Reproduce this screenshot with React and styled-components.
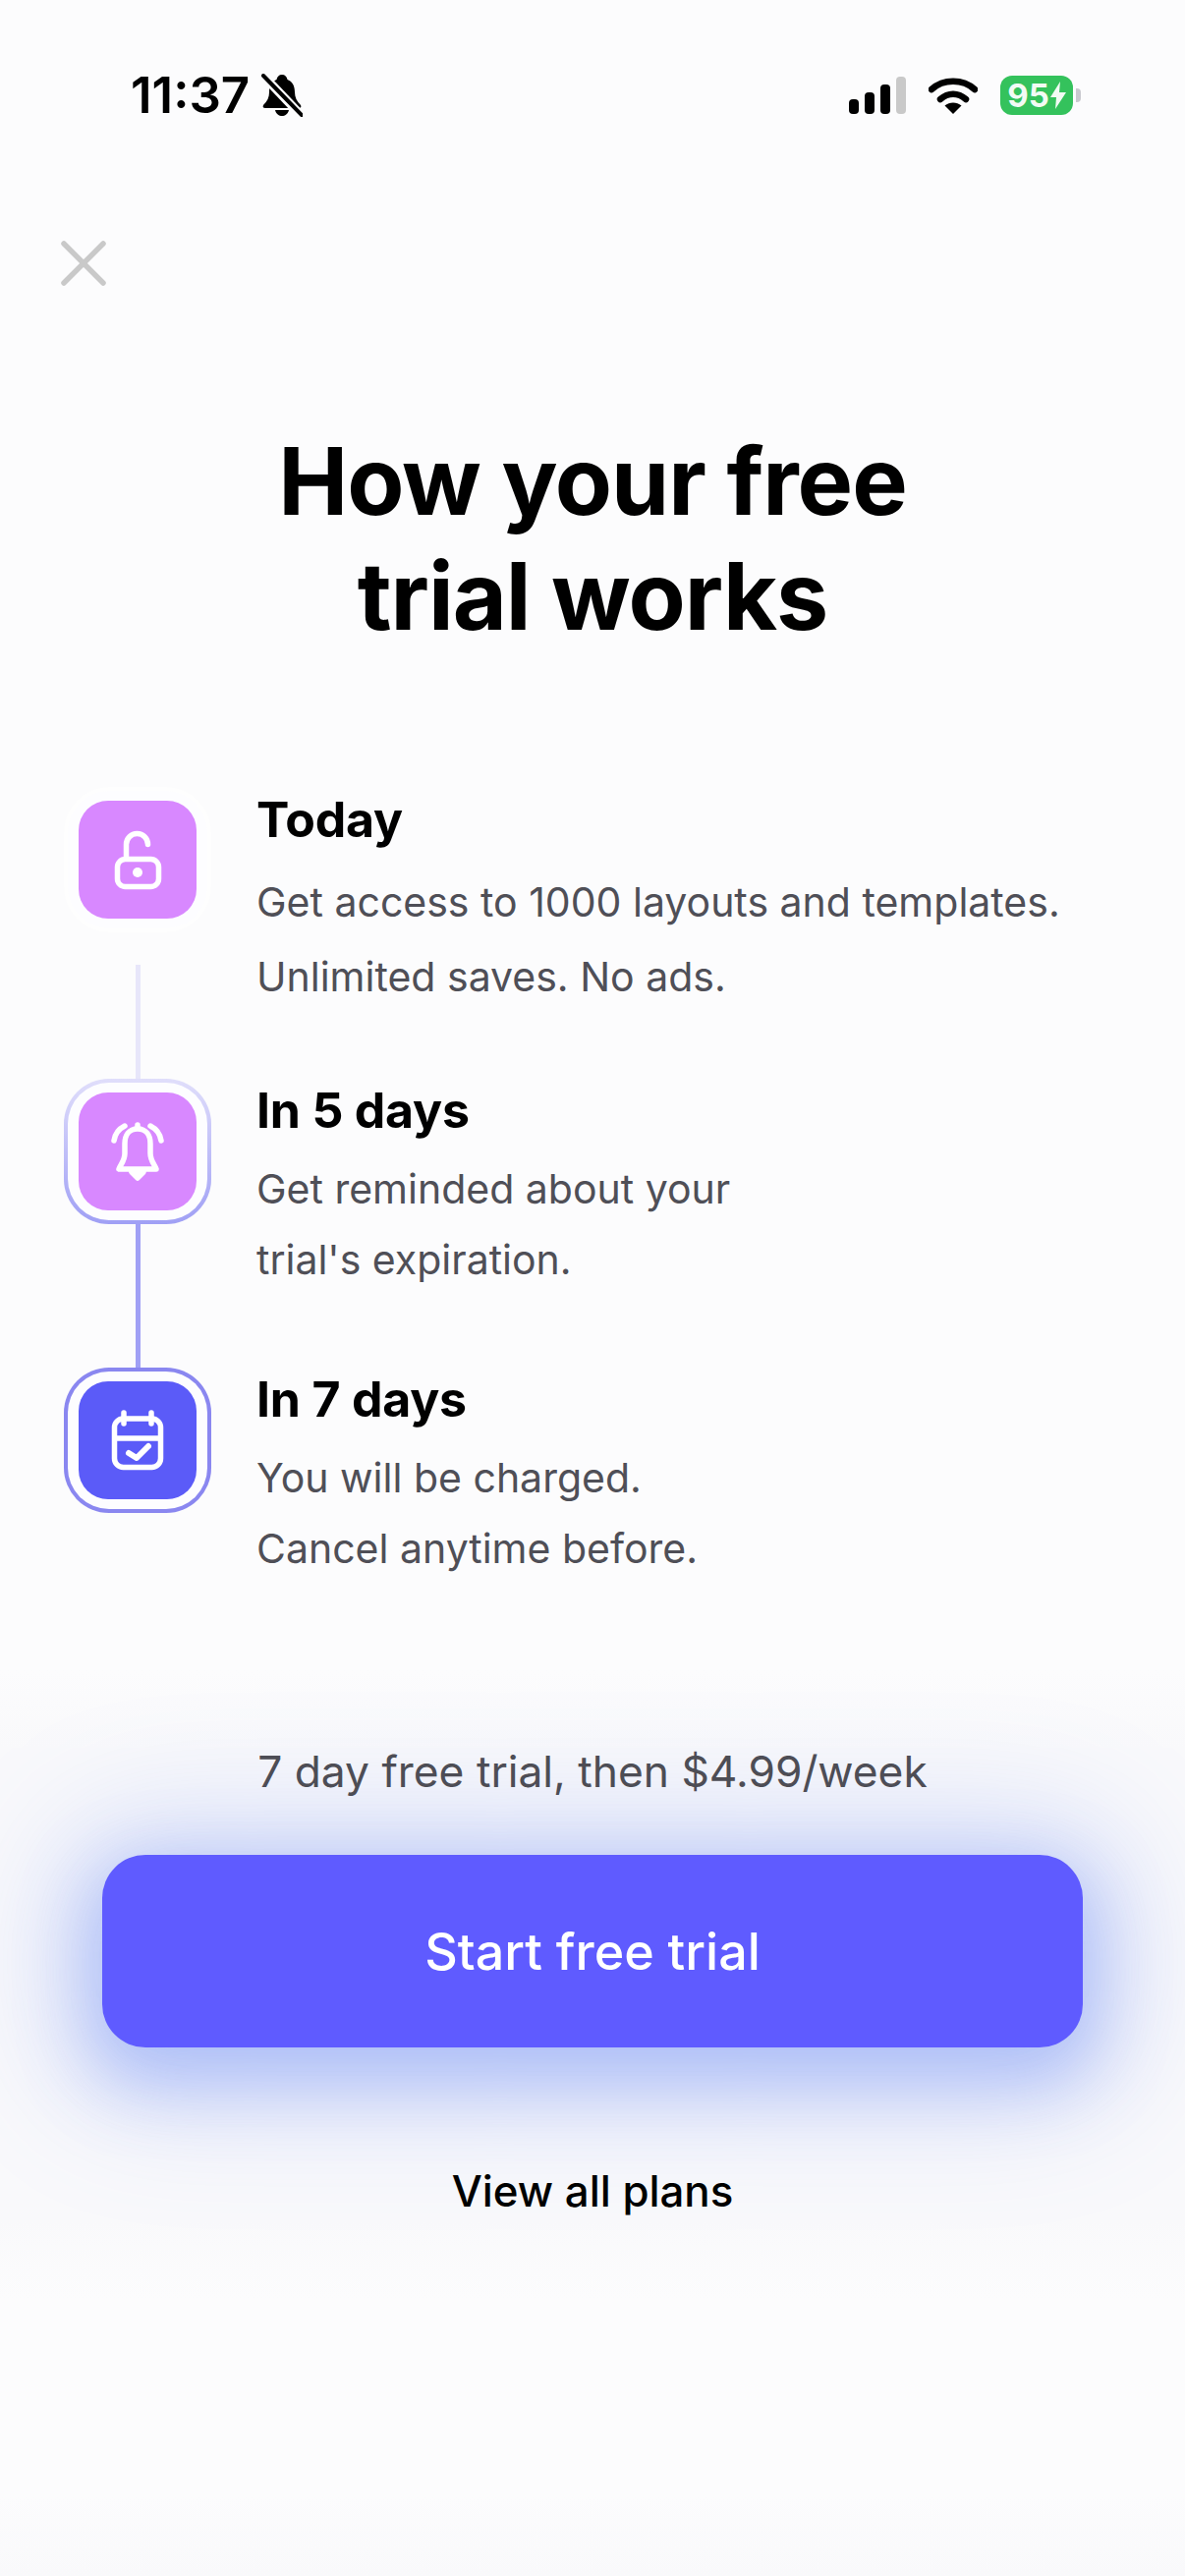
import React from "react";
import styled, { createGlobalStyle } from "styled-components";

const GlobalStyle = createGlobalStyle`
  html, body {
    margin: 0;
    padding: 0;
    background: #fcfcfd;
  }
  * {
    box-sizing: border-box;
  }
`;

const Screen = styled.div`
  width: 1206px;
  height: 2622px;
  overflow: hidden;
  font-family: Inter, "Noto Sans", sans-serif;
  color: #000;
  background: linear-gradient(
    180deg,
    #fcfcfd 0,
    #fcfcfd 1700px,
    #f9f9fb 1780px,
    #f9f9fb 2260px,
    #fcfcfd 2340px,
    #fcfcfd 2540px,
    #f9f9fb 2622px
  );
`;

const StatusBar = styled.div`
  display: flex;
  align-items: center;
  justify-content: space-between;
  height: 60px;
  margin-top: 67px;
  padding: 0 114px 0 133px;
`;

const StatusLeft = styled.div`
  display: flex;
  align-items: center;
  gap: 12px;
`;

const Time = styled.span`
  font-size: 51px;
  font-weight: 600;
  line-height: 60px;
`;

const StatusRight = styled.div`
  display: flex;
  align-items: center;
  gap: 23px;
`;

const Battery = styled.div`
  position: relative;
  display: flex;
  align-items: center;
  justify-content: center;
  gap: 1px;
  width: 74px;
  height: 40px;
  border-radius: 12px;
  background: #34c25c;
  color: #f2fbf4;
  font-size: 33px;
  font-weight: 700;

  &::after {
    content: "";
    position: absolute;
    right: -8px;
    top: 13px;
    width: 5px;
    height: 14px;
    border-radius: 0 4px 4px 0;
    background: #c9c9cf;
  }
`;

const CloseButton = styled.button`
  display: block;
  width: 46px;
  height: 46px;
  margin: 118px 0 0 62px;
  padding: 0;
  border: 0;
  background: none;
`;

const Title = styled.h1`
  margin: 140px 0 0;
  font-size: 95px;
  font-weight: 700;
  line-height: 117px;
  letter-spacing: -1px;
  text-align: center;
`;

const Timeline = styled.div`
  display: flex;
  flex-direction: column;
  margin-top: 136px;
  padding-left: 65px;
`;

const Step = styled.div`
  display: flex;
  gap: 46px;
  height: ${(p) => p.$height}px;
`;

const Track = styled.div`
  display: flex;
  flex-direction: column;
  align-items: center;
  width: 150px;
`;

const Ring = styled.div`
  display: flex;
  align-items: center;
  justify-content: center;
  flex: none;
  width: 150px;
  height: 148px;
  border: 4px solid transparent;
  border-radius: 46px;
  background: linear-gradient(#fdfdff, #fdfdff) padding-box,
    linear-gradient(${(p) => p.$from}, ${(p) => p.$to}) border-box;
`;

const Tile = styled.div`
  display: flex;
  align-items: center;
  justify-content: center;
  width: 120px;
  height: 120px;
  border-radius: 30px;
  background: ${(p) => p.$color};
`;

const Connector = styled.div`
  flex: 1;
  width: 5px;
  margin-top: ${(p) => p.$gap}px;
  background: ${(p) => p.$color};
`;

const StepText = styled.div`
  display: flex;
  flex-direction: column;
  padding-top: ${(p) => p.$top}px;
`;

const StepTitle = styled.h2`
  margin: 0;
  font-size: 50px;
  font-weight: 700;
  line-height: 60px;
  letter-spacing: -0.2px;
`;

const StepLine = styled.p`
  margin: ${(p) => p.$top}px 0 0;
  font-size: 41px;
  font-weight: 400;
  line-height: 50px;
  color: #4f4f57;
`;

const Offer = styled.p`
  margin: 172px 0 0;
  font-size: 44.3px;
  font-weight: 400;
  line-height: 54px;
  text-align: center;
  color: #4d4d55;
`;

const Cta = styled.button`
  display: block;
  width: 998px;
  height: 196px;
  margin: 58px 0 0 104px;
  border: 0;
  border-radius: 44px;
  background: #5f5bff;
  color: #fff;
  font-family: inherit;
  font-size: 52px;
  font-weight: 500;
  box-shadow: 0 24px 70px 14px rgba(90, 125, 245, 0.36), 0 10px 130px 50px rgba(90, 125, 245, 0.2);
`;

const PlansLink = styled.a`
  display: block;
  position: relative;
  margin-top: 120px;
  font-size: 43.8px;
  font-weight: 500;
  line-height: 54px;
  text-align: center;
  color: #000;
`;

const BellOff = () => (
  <svg width="42" height="44" viewBox="0 0 42 44">
    <path
      d="M21 1c-3 0-5 2-5.500 5C10 8 8 13 8 19c0 5-2 9-6 13-1 2 0 3 2 3h34c2 0 3-1 2-3-4-4-6-8-6-13 0-6-2-11-7.500-13C26 3 24 1 21 1z"
      fill="#000"
    />
    <path d="M14 37h14c-1 4-4 6-7 6s-6-2-7-6z" fill="#000" />
    <path d="M1 1l40 42" stroke="#fcfcfd" strokeWidth="9" />
    <path d="M2 2l39 40" stroke="#000" strokeWidth="4" strokeLinecap="round" />
  </svg>
);

const Signal = () => (
  <svg width="58" height="38" viewBox="0 0 58 38">
    <rect x="0" y="23" width="10" height="15" rx="4" fill="#000" />
    <rect x="16" y="16" width="10" height="22" rx="4" fill="#000" />
    <rect x="32" y="8" width="10" height="30" rx="4" fill="#000" />
    <rect x="48" y="0" width="10" height="38" rx="4" fill="#c9c9c9" />
  </svg>
);

const Wifi = () => (
  <svg width="50" height="38" viewBox="0 0 50 38">
    <path d="M3 13C15 2 35 2 47 13" fill="none" stroke="#000" strokeWidth="6.500" strokeLinecap="round" />
    <path d="M12 23c8-7 18-7 26 0" fill="none" stroke="#000" strokeWidth="6.500" strokeLinecap="round" />
    <path d="M25 38l-8.500-8.500c5-4 12-4 17 0z" fill="#000" />
  </svg>
);

const Bolt = () => (
  <svg width="16" height="28" viewBox="0 0 16 28">
    <path d="M10 0L0 16h6L5 28l11-17H9z" fill="#f2fbf4" />
  </svg>
);

const CloseIcon = () => (
  <svg width="46" height="46" viewBox="0 0 46 46">
    <path d="M3 3l40 40M43 3L3 43" stroke="#c9c9c9" strokeWidth="5.500" strokeLinecap="round" />
  </svg>
);

const LockIcon = () => (
  <svg width="120" height="120" viewBox="0 0 120 120" fill="none" stroke="#fff" strokeWidth="5.500" strokeLinecap="round">
    <rect x="39.500" y="59.500" width="42" height="28" rx="8" />
    <path d="M48.500 58V44.500a11 11 0 0 1 22 0" />
    <circle cx="60" cy="73" r="5" fill="#fff" stroke="none" />
  </svg>
);

const AlarmIcon = () => (
  <svg width="120" height="120" viewBox="0 0 120 120" fill="none" stroke="#fff" strokeWidth="5.500" strokeLinecap="round" strokeLinejoin="round">
    <path d="M60 37c-9 0-13 7-13 15v10c0 8-5 12-6 16h38c-1-4-6-8-6-16V52c0-8-4-15-13-15z" />
    <path d="M54 81h12l-6 6z" fill="#fff" />
    <path d="M60 33v2" />
    <path d="M36 49c1-7 5-12 11-15M84 49c-1-7-5-12-11-15" />
  </svg>
);

const CalendarIcon = () => (
  <svg width="120" height="120" viewBox="0 0 120 120" fill="none" stroke="#fff" strokeWidth="5.500" strokeLinecap="round" strokeLinejoin="round">
    <rect x="36.500" y="38" width="47" height="49.500" rx="9" />
    <path d="M46 32v11M74 32v11M37 58h46" />
    <path d="M51 73l8 5 12-12" strokeWidth="6" />
  </svg>
);

const steps = [
  {
    title: "Today",
    lines: ["Get access to 1000 layouts and templates.", "Unlimited saves. No ads."],
    icon: <LockIcon />,
    tile: "#d888ff",
    ring: ["#fefefe", "#fefefe"],
    line: "#e7e6fa",
    gap: 33,
    height: 297,
    top: 3,
    first: 29,
    second: 26,
  },
  {
    title: "In 5 days",
    lines: ["Get reminded about your", "trial's expiration."],
    icon: <AlarmIcon />,
    tile: "#d888ff",
    ring: ["#e0defb", "#a0a0f5"],
    line: "#a0a0f5",
    gap: 0,
    height: 294,
    top: 2,
    first: 25,
    second: 22,
  },
  {
    title: "In 7 days",
    lines: ["You will be charged.", "Cancel anytime before."],
    icon: <CalendarIcon />,
    tile: "#5b5bf8",
    ring: ["#8a87f0", "#8a87f0"],
    height: 212,
    top: 2,
    first: 25,
    second: 22,
  },
];

export default function App() {
  return (
    <Screen>
      <GlobalStyle />
      <StatusBar>
        <StatusLeft>
          <Time>11:37</Time>
          <BellOff />
        </StatusLeft>
        <StatusRight>
          <Signal />
          <Wifi />
          <Battery>
            95
            <Bolt />
          </Battery>
        </StatusRight>
      </StatusBar>
      <CloseButton>
        <CloseIcon />
      </CloseButton>
      <Title>
        How your free
        <br />
        trial works
      </Title>
      <Timeline>
        {steps.map((step) => (
          <Step key={step.title} $height={step.height}>
            <Track>
              <Ring $from={step.ring[0]} $to={step.ring[1]}>
                <Tile $color={step.tile}>{step.icon}</Tile>
              </Ring>
              {step.line && <Connector $color={step.line} $gap={step.gap} />}
            </Track>
            <StepText $top={step.top}>
              <StepTitle>{step.title}</StepTitle>
              <StepLine $top={step.first}>{step.lines[0]}</StepLine>
              <StepLine $top={step.second}>{step.lines[1]}</StepLine>
            </StepText>
          </Step>
        ))}
      </Timeline>
      <Offer>7 day free trial, then $4.99/week</Offer>
      <Cta>Start free trial</Cta>
      <PlansLink>View all plans</PlansLink>
    </Screen>
  );
}
